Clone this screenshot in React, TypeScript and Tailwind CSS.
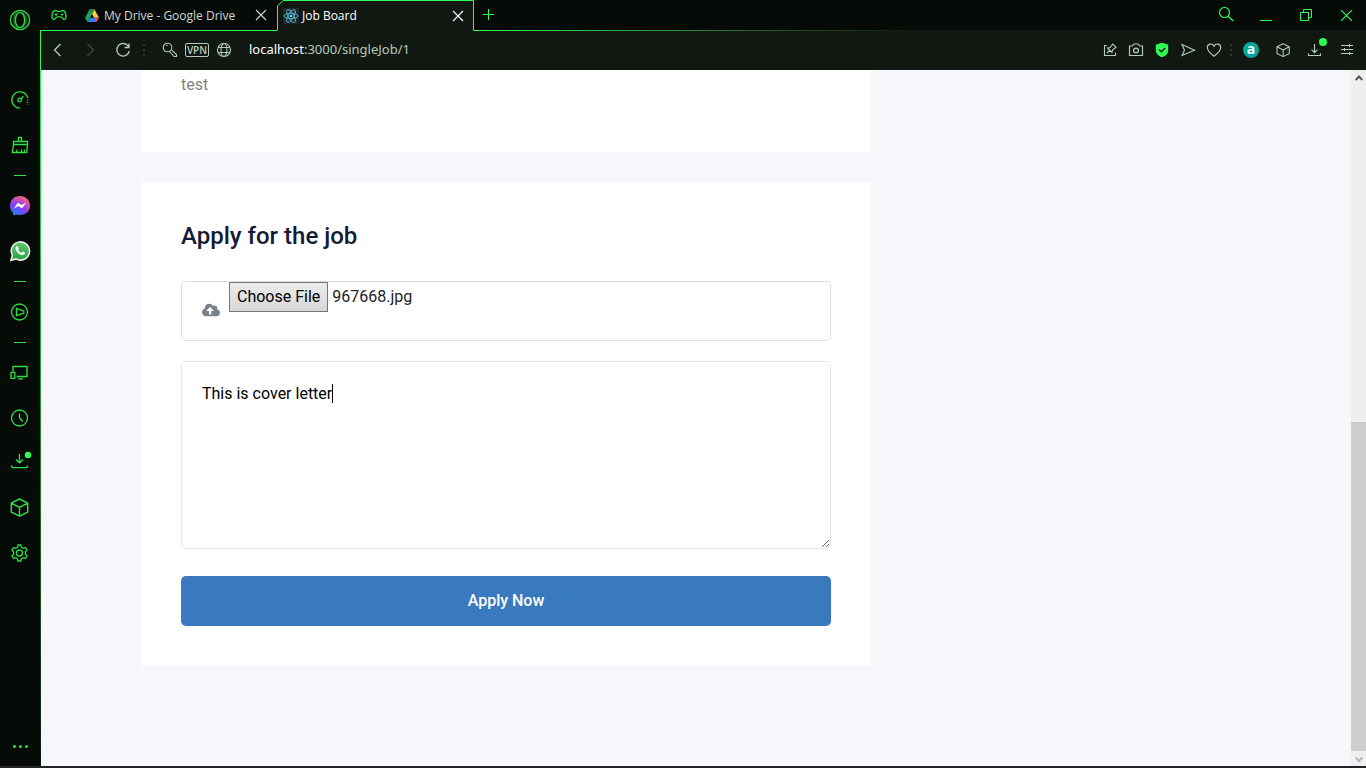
import { useState } from "react";
import type { ReactNode } from "react";

type IconProps = { children: ReactNode; className?: string; size?: number };

function Icon({ children, className = "", size = 20 }: IconProps) {
  return (
    <svg
      width={size}
      height={size}
      viewBox={`0 0 ${size} ${size}`}
      fill="none"
      stroke="currentColor"
      strokeWidth="1.3"
      className={`shrink-0 ${className}`}
      aria-hidden="true"
    >
      {children}
    </svg>
  );
}

const OperaIcon = () => (
  <Icon size={22}>
    <circle cx="11" cy="11" r="9.6" />
    <ellipse cx="11" cy="11" rx="4.6" ry="7.6" />
    <path d="M9 2.200C6 4 5 7 5 11s1 7 4 8.800M13 3.600c3 1.400 4.300 4 4.300 7.400s-1.300 6-4.300 7.400" strokeWidth="0.700" />
  </Icon>
);

const SpeedIcon = () => (
  <Icon>
    <path d="M10 18.200a8.200 8.200 0 1 1 7.800-10.800" />
    <path d="M17.500 7v8" strokeDasharray="1 1.500" />
    <circle cx="9.600" cy="10" r="1.800" />
    <path d="m11 8.700 2.400-2.500" />
  </Icon>
);

const BroomIcon = () => (
  <Icon>
    <path d="M8.500 6.500V2.500h3v4M3.500 6.500h14v3h-14zM3.500 9.500l-1.200 8h14.400l.8-8M6.500 17.500l.5-3M11.500 17.500v-3M14.500 17.500v-3" />
  </Icon>
);

const MessengerIcon = () => (
  <Icon size={22}>
    <defs>
      <radialGradient id="messenger" cx="0.2" cy="1" r="1.1">
        <stop offset="0" stopColor="#128bff" />
        <stop offset="0.55" stopColor="#8a3df5" />
        <stop offset="1" stopColor="#ff6570" />
      </radialGradient>
    </defs>
    <path
      d="M11 1C5.300 1 1 5.100 1 10.700c0 2.900 1.200 5.400 3.100 7.100l.1 2.800 3-1.200c1.200.3 2.400.6 3.800.6 5.700 0 10-4 10-9.300S16.700 1 11 1Z"
      fill="url(#messenger)"
      stroke="none"
    />
    <path d="m5 13.500 3-4.700c.5-.8 1.500-1 2.200-.4l2.300 1.700 4.500-2.500-3 4.700c-.5.800-1.500 1-2.200.4l-2.300-1.700Z" fill="#fff" stroke="none" />
  </Icon>
);

const WhatsAppIcon = () => (
  <Icon size={22}>
    <defs>
      <linearGradient id="whatsapp" x1="0" y1="0" x2="0" y2="1">
        <stop offset="0" stopColor="#60c96a" />
        <stop offset="1" stopColor="#27a243" />
      </linearGradient>
    </defs>
    <path
      d="M2 20.300 3.400 15.300a9.100 9.100 0 1 1 3.500 3.600Z"
      fill="url(#whatsapp)"
      stroke="#e8ebe8"
      strokeWidth="1.600"
    />
    <path
      d="M8.300 6c-.5-.2-1.800.7-1.800 2.400 0 2.400 3.900 6.700 7 6.700 1.700 0 2.700-1.100 2.600-2.300l-2.500-1.300-1.200 1.300c-1.500-.5-2.800-1.700-3.400-3l.9-1.200Z"
      fill="#fff"
      stroke="none"
    />
  </Icon>
);

const PlayerIcon = () => (
  <Icon>
    <circle cx="9.500" cy="10" r="8" />
    <path d="M6.500 6.500v7l6.800-2.200c.9-.4.9-2 0-2.400Z" />
  </Icon>
);

const DevicesIcon = () => (
  <Icon>
    <path d="M3 8.500v-5h14v10H6.500M8 15.800h5" />
    <path d="M1 9.300h3.800v6H1z" />
  </Icon>
);

const ClockIcon = () => (
  <Icon>
    <circle cx="9.500" cy="10" r="8" />
    <path d="M9.500 5.500V10l3.300 3.500" />
  </Icon>
);

const DownloadIcon = () => (
  <Icon size={24}>
    <path d="M11.500 3v8.500m-3.500-3 3.500 3.300 3.500-3.300M3.500 14.500c0 1.500.5 2.200 2 2.200h12c1.500 0 2-.7 2-2.200" />
    <circle cx="20" cy="4" r="3.200" fill="#2dff52" stroke="none" />
  </Icon>
);

const CubeIcon = ({ size = 20 }: { size?: number }) => (
  <svg width={size} height={size} viewBox="0 0 20 20" fill="none" stroke="currentColor" strokeWidth="1.400" strokeLinejoin="round" aria-hidden="true">
    <path d="m9.500 1 8.200 4.100v9L9.500 18.200l-8.200-4.100v-9Zm-8.200 4.100 8.200 4.300 8.200-4.300M9.500 9.400v8.800" />
  </svg>
);

const GearIcon = () => (
  <Icon>
    <circle cx="9.500" cy="10" r="3" />
    <path
      strokeLinejoin="round"
      d="M8 2h3l.4 2.300 1.800 1 2.200-.8 1.700 2.700-1.700 1.600v2.400l1.700 1.600-1.700 2.700-2.200-.8-1.800 1L11 18H8l-.4-2.300-1.800-1-2.200.8-1.700-2.700 1.700-1.600V8.800L1.900 7.200l1.700-2.700 2.200.8 1.800-1Z"
    />
  </Icon>
);

const DriveIcon = () => (
  <Icon size={16}>
    <g stroke="none">
      <path d="M5.500 1.500h5L15 9.800h-4.800Z" fill="#ffcf35" />
      <path d="M3.500 14 6 9.800h9L12.500 14Z" fill="#3b7df0" />
      <path d="m5.500 1.500 2.600 4.400L3.500 14 1 10Z" fill="#1ea362" />
      <path d="m5.500 1.500h5L8.100 5.900Z" fill="#188038" />
      <path d="m12.800 9.800 2.200 0-2.500 4.200-1.600-4.200Z" fill="#ea4335" />
    </g>
  </Icon>
);

const ReactIcon = () => (
  <Icon size={16}>
    <rect width="16" height="16" rx="1" fill="#222728" stroke="none" />
    <g stroke="#53b9d6" strokeWidth="0.900">
      <ellipse cx="8" cy="8" rx="7" ry="2.700" />
      <ellipse cx="8" cy="8" rx="7" ry="2.700" transform="rotate(60 8 8)" />
      <ellipse cx="8" cy="8" rx="7" ry="2.700" transform="rotate(120 8 8)" />
    </g>
    <circle cx="8" cy="8" r="1.300" fill="#61dafb" stroke="none" />
  </Icon>
);

const CloseIcon = ({ size = 12 }: { size?: number }) => (
  <svg width={size} height={size} viewBox="0 0 12 12" fill="none" stroke="currentColor" strokeWidth="1.100" aria-hidden="true">
    <path d="m1 1 10 10M11 1 1 11" />
  </svg>
);

const SIDE_ITEMS: { label: string; icon?: ReactNode }[] = [
  { label: "GX Control", icon: <SpeedIcon /> },
  { label: "GX Cleaner", icon: <BroomIcon /> },
  { label: "" },
  { label: "Messenger", icon: <MessengerIcon /> },
  { label: "WhatsApp", icon: <WhatsAppIcon /> },
  { label: "" },
  { label: "Player", icon: <PlayerIcon /> },
  { label: "" },
  { label: "My Flow", icon: <DevicesIcon /> },
  { label: "History", icon: <ClockIcon /> },
  { label: "Downloads", icon: <DownloadIcon /> },
  { label: "Extensions", icon: <CubeIcon /> },
  { label: "Settings", icon: <GearIcon /> },
];

function Sidebar() {
  return (
    <nav className="flex w-10 shrink-0 flex-col bg-[#070b08] text-[#2de048]" aria-label="Sidebar">
      <button className="flex h-10 items-center justify-center" aria-label="Opera menu">
        <OperaIcon />
      </button>
      <div className="mt-[37px] flex flex-col">
        {SIDE_ITEMS.map((item, i) =>
          item.icon ? (
            <button key={i} className="flex h-[45px] items-center justify-center" aria-label={item.label}>
              {item.icon}
            </button>
          ) : (
            <div key={i} className="flex h-4 items-center justify-center">
              <div className="h-px w-3 bg-[#2de048]" />
            </div>
          ),
        )}
      </div>
      <button className="mt-auto mb-[10px] flex h-5 items-center justify-center gap-[3px]" aria-label="More">
        <span className="size-[3px] rounded-full bg-[#2de048]" />
        <span className="size-[3px] rounded-full bg-[#2de048]" />
        <span className="size-[3px] rounded-full bg-[#2de048]" />
      </button>
    </nav>
  );
}

function TabStrip() {
  return (
    <div className="flex h-[31px] shrink-0 bg-[#070b08] font-['Open_Sans',sans-serif] text-xs text-[#d2d6d2]">
      <div className="flex w-[237px] shrink-0 items-center border-b border-[#2dff52]">
        <button className="flex w-[38px] justify-center text-[#2de048]" aria-label="GX Corner">
          <Icon size={16}>
            <path d="M4.500 3.500C6 3.500 6 4.600 8 4.600s2-1.100 3.500-1.100c2 0 3.500 1.500 3.500 6.500 0 2.500-1.800 3-3 1.700-1-1-1.300-2-4-2s-3 1-4 2C2.800 13 1 12.500 1 10c0-5 1.500-6.500 3.500-6.500Z" />
            <path d="M3.600 7.500h3M5.100 6v3M9.800 7.500h2.600M11.100 6.200v2.600" strokeWidth="1" />
          </Icon>
        </button>
        <a href="#drive" className="flex flex-1 items-center gap-1 pt-px pl-[6px] whitespace-nowrap">
          <DriveIcon />
          <span>My Drive - Google Drive</span>
        </a>
        <button className="flex w-8 justify-center" aria-label="Close My Drive">
          <CloseIcon />
        </button>
      </div>
      <div className="relative flex w-[197px] shrink-0 items-center bg-[#111812] text-white">
        <svg className="absolute inset-0" width="197" height="31" viewBox="0 0 197 31" fill="none" aria-hidden="true">
          <path d="M0 0h5L.5 5.500H0Z" fill="#070b08" />
          <path d="M0 30.500.5 30V6L6 .5h190.500v30h.5" stroke="#2dff52" />
        </svg>
        <a href="#job-board" className="relative flex flex-1 items-center gap-[3px] pl-[6px]">
          <ReactIcon />
          <span>Job Board</span>
        </a>
        <button className="relative flex w-8 justify-center" aria-label="Close Job Board">
          <CloseIcon />
        </button>
      </div>
      <div className="flex flex-1 flex-col">
        <div className="flex h-[30px] items-center text-[#2dff52]">
          <button className="flex w-[30px] justify-center" aria-label="New tab">
            <Icon size={12}>
              <path d="M5.500 0v11M0 5.500h11" strokeWidth="1" />
            </Icon>
          </button>
          <div className="ml-auto flex">
            <button className="flex w-10 items-center justify-center" aria-label="Search tabs">
              <Icon size={16}>
                <circle cx="6.500" cy="5.500" r="5" strokeWidth="1.100" />
                <path d="m10.200 9.300 5 4.700" />
              </Icon>
            </button>
            <button className="flex w-10 items-center justify-center" aria-label="Minimize">
              <Icon size={12}>
                <path d="M0 11.500h12" strokeWidth="1" />
              </Icon>
            </button>
            <button className="flex w-10 items-center justify-center" aria-label="Restore">
              <Icon size={12}>
                <path d="M.5 3.500h8v8h-8zM3.500 3.500v-3h8v8h-3" strokeWidth="1" />
              </Icon>
            </button>
            <button className="flex w-10 items-center justify-center" aria-label="Close window">
              <CloseIcon size={13} />
            </button>
          </div>
        </div>
        <div className="h-px bg-linear-to-r from-[#2dff52] to-[#111812] to-50%" />
      </div>
    </div>
  );
}

const Dots = () => (
  <div className="flex w-2 shrink-0 flex-col items-center gap-[3px]" aria-hidden="true">
    <span className="size-[2px] bg-[#303632]" />
    <span className="size-[2px] bg-[#303632]" />
    <span className="size-[2px] bg-[#303632]" />
  </div>
);

function Toolbar() {
  return (
    <div className="flex h-[39px] shrink-0 items-center bg-[#111812] pr-[3px] pb-px pl-px text-[#b4cbb9]">
      <button className="flex w-8 justify-center" aria-label="Back">
        <Icon size={14}>
          <path d="M9.500 1 3.500 7l6 6" />
        </Icon>
      </button>
      <button className="flex w-8 justify-center text-[#404842]" aria-label="Forward">
        <Icon size={14}>
          <path d="m4.500 1 6 6-6 6" />
        </Icon>
      </button>
      <button className="flex w-[34px] justify-center" aria-label="Reload">
        <Icon size={16}>
          <path d="M13.500 4.500A6.300 6.300 0 1 0 14.300 9M14 1.500v4H9.500" />
        </Icon>
      </button>
      <Dots />
      <div className="ml-[14px] flex items-center gap-[7px]">
        <Icon size={16}>
          <circle cx="5.500" cy="5.500" r="4.300" strokeWidth="1.100" />
          <path d="M4 3.500h1.500M9.200 7.700l5.300 4.800v2h-2.500l-4.500-5" strokeWidth="1.100" />
        </Icon>
        <span className="flex h-[14px] w-6 items-center justify-center rounded-xs border border-[#b4cbb9] font-['Open_Sans',sans-serif] text-[10px] font-semibold">
          VPN
        </span>
        <Icon size={16}>
          <circle cx="8" cy="8" r="6.500" strokeWidth="1.100" />
          <ellipse cx="8" cy="8" rx="3" ry="6.500" strokeWidth="1.100" />
          <path d="M2.300 5.500h11.400M2.300 10.500h11.400" strokeWidth="1.100" />
        </Icon>
      </div>
      <div className="ml-[17px] flex-1 font-['Noto_Sans',sans-serif] text-[13px] whitespace-nowrap">
        <span className="text-white">localhost</span>:3000/singleJob/1
      </div>
      <button className="flex w-[26px] justify-center" aria-label="Pinboard">
        <Icon size={14}>
          <path d="M4 2.500H1.500v10h11V9.500" strokeWidth="1.100" />
          <path d="m4 10 2.800-2.800M4.500 5l4.500 4.500.5-2.500L13 4.200 9.800 1 7 4.500Z" strokeWidth="1.100" />
        </Icon>
      </button>
      <button className="flex w-[26px] justify-center" aria-label="Snapshot">
        <Icon size={16}>
          <path d="M1.500 4h3l1.200-2h4.600l1.200 2h3v9.500h-13Z" strokeWidth="1.200" />
          <circle cx="8" cy="8.500" r="2.400" />
        </Icon>
      </button>
      <button className="flex w-[26px] justify-center" aria-label="Ad blocker">
        <Icon size={16}>
          <path d="m8 .8 6.200 2v5.700c0 3.500-3 5.500-6.200 6.700-3.200-1.200-6.200-3.200-6.200-6.700V2.800Z" fill="#2dff52" stroke="none" />
          <path d="m5 7.500 2.400 2.300L11.200 6" stroke="#111812" strokeWidth="1.500" />
        </Icon>
      </button>
      <button className="flex w-[26px] justify-center" aria-label="Send">
        <Icon size={16}>
          <path d="m2 2.500 12.500 5.700L2 13.500l2.500-5.300Z" strokeWidth="1.100" />
        </Icon>
      </button>
      <button className="flex w-[26px] justify-center" aria-label="Bookmark">
        <Icon size={16}>
          <path d="M8 14.300C4 11.200 1.300 8.800 1.300 5.600c0-4 5-4.800 6.700-1.400 1.700-3.400 6.700-2.600 6.700 1.400 0 3.200-2.700 5.600-6.700 8.700Z" strokeWidth="1.100" />
        </Icon>
      </button>
      <Dots />
      <button className="flex w-8 justify-center" aria-label="Amazon assistant">
        <span className="flex size-4 items-center justify-center rounded-full bg-[#00a99d] pb-[2px] font-['Open_Sans',sans-serif] text-sm leading-none font-bold text-white">
          a
        </span>
      </button>
      <button className="flex w-8 justify-center" aria-label="Extensions">
        <CubeIcon size={15} />
      </button>
      <button className="relative flex w-8 justify-center" aria-label="Downloads">
        <Icon size={16}>
          <path d="M7.500 2v8.500M4.500 7.700l3 3 3-3M1.500 11.500v2h12v-2" strokeWidth="1.100" />
        </Icon>
        <span className="absolute -top-1 right-1 size-2 rounded-full bg-[#2dff52]" />
      </button>
      <button className="flex w-8 justify-center" aria-label="Easy setup">
        <Icon size={12}>
          <path d="M0 1.500h12M0 5.500h12M0 9.500h12M8.500 0v3M3.500 4v3M8.500 8v3" strokeWidth="1" />
        </Icon>
      </button>
    </div>
  );
}

function Scrollbar() {
  return (
    <div className="flex w-[15px] shrink-0 flex-col bg-[#efefef]" aria-hidden="true">
      <div className="flex h-[15px] items-center justify-center text-[#555]">
        <Icon size={8}>
          <path d="m.7 6 3.300-3.500L7.300 6" strokeWidth="2" />
        </Icon>
      </div>
      <div className="flex-[337]" />
      <div className="flex-[329] bg-[#cdcdcd]" />
      <div className="flex h-[15px] items-center justify-center text-[#b5b5b5]">
        <Icon size={8}>
          <path d="M.7 2.500 4 6l3.300-3.500" strokeWidth="2" />
        </Icon>
      </div>
    </div>
  );
}

function ApplyForm() {
  const [fileName, setFileName] = useState("967668.jpg");
  const [letter, setLetter] = useState("This is cover letter");
  return (
    <form className="bg-white p-10" onSubmit={(e) => e.preventDefault()}>
      <h4 className="mb-[31px] text-2xl leading-7 font-medium text-[#131b36]">Apply for the job</h4>
      <label className="flex h-[60px] items-start rounded-[5px] border border-[#dcdfe2] pl-5 text-[#212529]">
        <svg className="mt-5 mr-[9px] h-4 w-[18px] shrink-0" viewBox="0 0 640 512" fill="#7a838b" aria-hidden="true">
          <path d="M537.600 226.600c4.100-10.700 6.400-22.400 6.400-34.600 0-53-43-96-96-96-19.700 0-38.100 6-53.300 16.200C367 64.200 315.300 32 256 32c-88.400 0-160 71.600-160 160 0 2.700.1 5.400.2 8.100C40.200 219.800 0 273.200 0 336c0 79.500 64.500 144 144 144h368c70.700 0 128-57.300 128-128 0-61.900-44-113.600-102.400-125.400zM393.400 288H328v112c0 8.800-7.200 16-16 16h-48c-8.800 0-16-7.200-16-16V288h-65.400c-14.300 0-21.400-17.200-11.300-27.300l105.400-105.400c6.200-6.200 16.400-6.200 22.600 0l105.400 105.400c10.100 10.100 2.900 27.300-11.300 27.300z" />
        </svg>
        <span className="flex h-[30px] items-center border border-[#767676] bg-linear-to-b from-[#ededed] to-[#d6d6d6] px-[7px] text-black">
          Choose File
        </span>
        <span className="ml-1 leading-[30px]">{fileName}</span>
        <input
          type="file"
          className="sr-only"
          onChange={(e) => setFileName(e.target.files?.[0]?.name ?? "No file chosen")}
        />
      </label>
      <div className="relative mt-5">
        <textarea
          aria-label="Cover letter"
          value={letter}
          onChange={(e) => setLetter(e.target.value)}
          className="block h-[188px] w-full resize-y rounded-[5px] border border-[#e5e6e9] p-5 leading-6 text-black caret-transparent outline-none"
        />
        <span className="absolute top-[23px] left-[151px] h-[19px] w-px bg-black" aria-hidden="true" />
      </div>
      <button type="submit" className="mt-[27px] h-[50px] w-full rounded-[5px] bg-[#3979be] font-medium text-white">
        Apply Now
      </button>
    </form>
  );
}

export default function App() {
  return (
    <div className="flex h-screen flex-col overflow-hidden bg-[#222326]">
      <div className="mb-[2px] flex min-h-0 flex-1">
        <Sidebar />
        <div className="flex min-w-0 flex-1 flex-col">
          <TabStrip />
          <div className="flex min-h-0 flex-1">
            <div className="w-px shrink-0 bg-linear-to-b from-[#2dff52] via-[#1f9a35] to-[#0a180d]" />
            <div className="flex min-w-0 flex-1 flex-col">
              <Toolbar />
              <div className="flex min-h-0 flex-1">
                <main className="flex-1 overflow-hidden bg-[#f5f7fa] font-[Roboto,sans-serif] text-base">
                  <div className="mx-auto max-w-[1110px]">
                    <div className="flex max-w-[730px] flex-col gap-[30px]">
                      <section className="bg-white px-10 pb-[55px]">
                        <p className="pt-[3px] leading-6 text-[#7f8386]">test</p>
                      </section>
                      <ApplyForm />
                    </div>
                  </div>
                </main>
                <Scrollbar />
              </div>
            </div>
          </div>
        </div>
      </div>
    </div>
  );
}
